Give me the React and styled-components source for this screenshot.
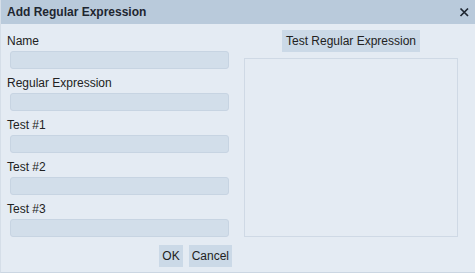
import React from 'react';
import styled, { createGlobalStyle } from 'styled-components';

const GlobalStyle = createGlobalStyle`
  html, body {
    margin: 0;
    padding: 0;
    background: #e4ebf3;
  }
  body {
    font-family: "Liberation Sans", Arial, sans-serif;
  }
`;

const Dialog = styled.div`
  width: 475px;
  height: 273px;
  box-sizing: border-box;
  display: flex;
  flex-direction: column;
  background-color: #e4ebf3;
  border-left: 1px solid #d5dee8;
  border-bottom: 1px solid #cbd6e2;
  color: #222;
  font-size: 12px;
`;

const TitleBar = styled.div`
  height: 24px;
  flex: none;
  display: flex;
  align-items: center;
  justify-content: space-between;
  padding: 0 5px 0 6px;
  background-color: #b9cadb;
  font-weight: bold;
  font-size: 12px;
  color: #1e2630;
`;

const CloseButton = styled.button`
  width: 11px;
  height: 11px;
  padding: 0;
  border: 0;
  background: none;
  cursor: pointer;
  display: flex;
  > svg {
    display: block;
  }
`;

const Body = styled.div`
  flex: 1;
  display: flex;
  gap: 12px;
  padding: 6px 17px 0 5px;
`;

const LeftColumn = styled.div`
  width: 226px;
  display: flex;
  flex-direction: column;
  padding-top: 3px;
`;

const Label = styled.div`
  line-height: 16px;
  height: 16px;
  margin: 0 0 2px 1px;
  color: #222;
`;

const Input = styled.input`
  display: block;
  box-sizing: border-box;
  height: 18px;
  margin: 0 3px 6px 4px;
  padding: 0 4px;
  border: 1px solid #c7d4e2;
  border-radius: 3px;
  background-color: #d2deea;
  font-family: inherit;
  font-size: 12px;
  outline: none;
`;

const ButtonRow = styled.div`
  display: flex;
  justify-content: flex-end;
  gap: 6px;
  margin-top: 2px;
`;

const Button = styled.button`
  height: 22px;
  padding: 0 ${props => props.pad || 3}px;
  border: 0;
  border-radius: 0;
  background-color: #cbd9e7;
  font-family: inherit;
  font-size: 12px;
  color: #222;
  cursor: pointer;
`;

const RightColumn = styled.div`
  flex: 1;
  display: flex;
  flex-direction: column;
  align-items: center;
`;

const ResultBox = styled.div`
  align-self: stretch;
  height: 179px;
  box-sizing: border-box;
  margin-top: 6px;
  border: 1px solid #cfd9e5;
  background-color: #e4ebf3;
`;

const fields = ['Name', 'Regular Expression', 'Test #1', 'Test #2', 'Test #3'];

export default function App() {
  return (
    <>
      <GlobalStyle />
      <Dialog>
        <TitleBar>
          <span>Add Regular Expression</span>
          <CloseButton aria-label="Close">
            <svg width="11" height="11" viewBox="0 0 11 11">
              <path d="M1.5 1.5 L9 9 M9 1.5 L1.5 9" stroke="#1e2630" strokeWidth="1.7" />
            </svg>
          </CloseButton>
        </TitleBar>
        <Body>
          <LeftColumn>
            {fields.map(name => (
              <React.Fragment key={name}>
                <Label>{name}</Label>
                <Input type="text" />
              </React.Fragment>
            ))}
            <ButtonRow>
              <Button>OK</Button>
              <Button>Cancel</Button>
            </ButtonRow>
          </LeftColumn>
          <RightColumn>
            <Button pad={4}>Test Regular Expression</Button>
            <ResultBox />
          </RightColumn>
        </Body>
      </Dialog>
    </>
  );
}
